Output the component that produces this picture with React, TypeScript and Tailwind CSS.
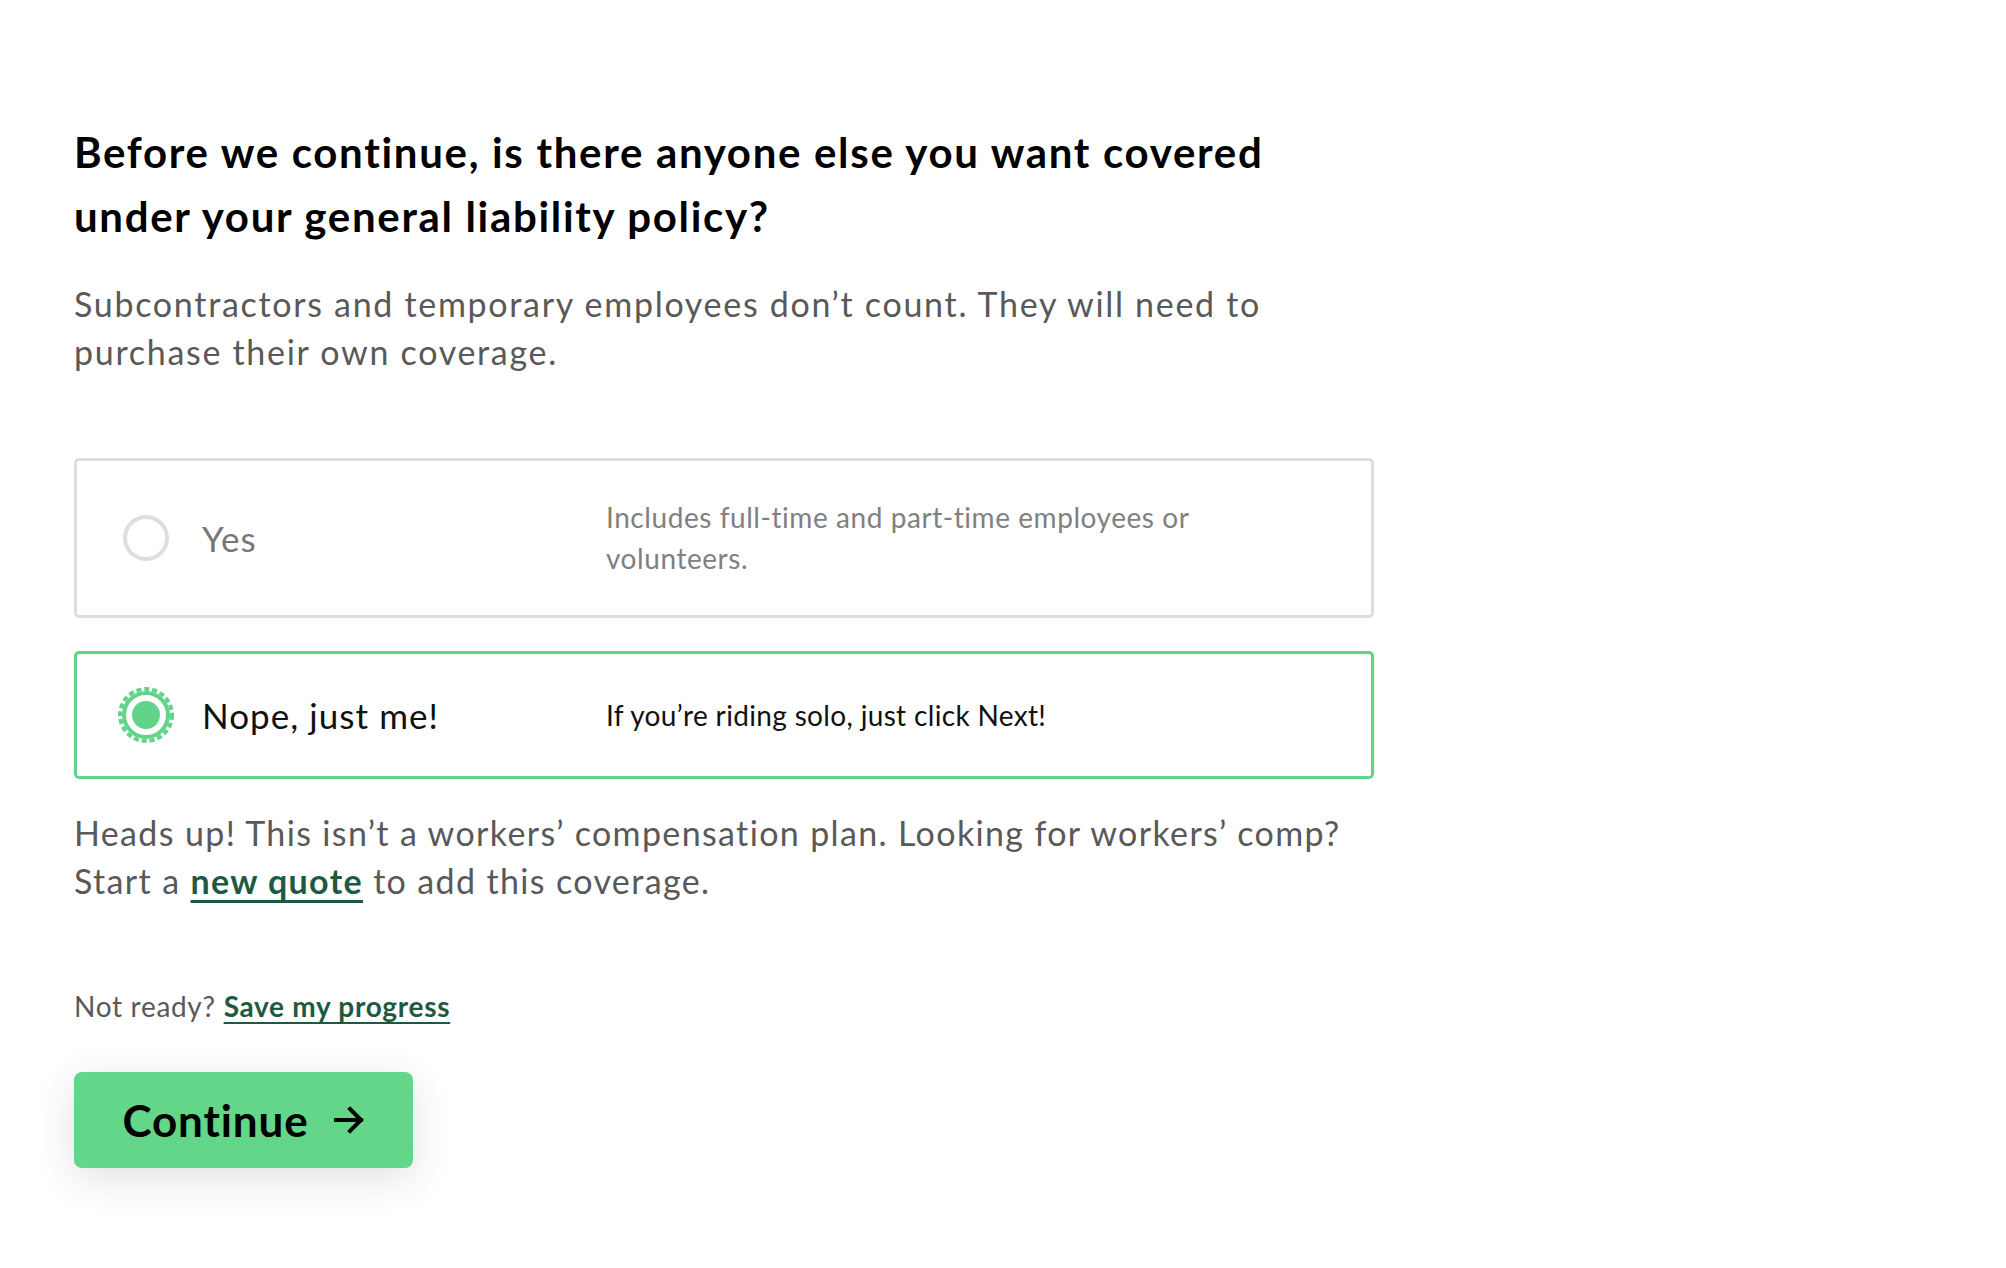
import React from 'react';

const font = { fontFamily: 'Lato, "Noto Sans", sans-serif' };

function EmptyRadio() {
    return (
        <div className="flex h-[56px] w-[56px] shrink-0 items-center justify-center">
            <div className="h-[46px] w-[46px] rounded-full border-[4px] border-[#dedede]" />
        </div>
    );
}

function CheckedRadio() {
    return (
        <svg width="56" height="56" viewBox="0 0 56 56" className="shrink-0">
            <circle cx="28" cy="28" r="26" fill="none" stroke="#62d48a" strokeWidth="4" strokeDasharray="5 3" />
            <circle cx="28" cy="28" r="22" fill="none" stroke="#62d48a" strokeWidth="4" />
            <circle cx="28" cy="28" r="14" fill="#62d48a" />
        </svg>
    );
}

function ArrowIcon() {
    return (
        <svg width="32" height="28" viewBox="0 0 32 28" fill="none" stroke="#000" strokeWidth="4" strokeLinecap="square">
            <path d="M3 14 H28" />
            <path d="M17 3 L28 14 L17 25" strokeLinejoin="miter" />
        </svg>
    );
}

export default function App() {
    const options = [
        {
            id: 'yes',
            label: 'Yes',
            desc: ['Includes full-time and part-time employees or', 'volunteers.'],
            selected: false,
        },
        {
            id: 'no',
            label: 'Nope, just me!',
            desc: ['If you’re riding solo, just click Next!'],
            selected: true,
        },
    ];

    return (
        <div className="min-h-screen w-full bg-white" style={font}>
            <div className="box-content flex w-[1300px] flex-col pl-[74px] pt-[120px]">
                {/* Question */}
                <h1 className="whitespace-nowrap text-[42px] font-bold leading-[64px] tracking-[0.04em] text-black">
                    Before we continue, is there anyone else you want covered
                    <br />
                    under your general liability policy?
                </h1>
                <p className="mt-[32px] whitespace-nowrap text-[34px] leading-[48px] tracking-[0.05em] text-[#595959]">
                    Subcontractors and temporary employees don’t count. They will need to
                    <br />
                    purchase their own coverage.
                </p>

                {/* Options */}
                <div className="mt-[82px] flex flex-col gap-[33px]">
                    {options.map((opt) => (
                        <label
                            key={opt.id}
                            className={
                                opt.selected
                                    ? 'flex cursor-pointer items-center rounded-[5px] border-[3px] border-[#62d48a] py-[33px] pl-[41px] pr-[40px]'
                                    : 'flex cursor-pointer items-center rounded-[5px] border-[3px] border-[#dddddd] py-[36px] pl-[41px] pr-[40px]'
                            }
                        >
                            {opt.selected ? <CheckedRadio /> : <EmptyRadio />}
                            <span
                                className={
                                    opt.selected
                                        ? 'ml-[28px] w-[404px] shrink-0 text-[35px] leading-[44px] tracking-[0.03em] text-[#111]'
                                        : 'ml-[28px] w-[404px] shrink-0 text-[35px] leading-[44px] tracking-[0.03em] text-[#777]'
                                }
                            >
                                {opt.label}
                            </span>
                            <span
                                className={
                                    opt.selected
                                        ? 'whitespace-nowrap text-[28px] leading-[41px] tracking-[0.012em] text-[#111]'
                                        : 'whitespace-nowrap text-[28px] leading-[41px] tracking-[0.02em] text-[#808080]'
                                }
                            >
                                {opt.desc.map((line, i) => (
                                    <React.Fragment key={i}>
                                        {i > 0 && <br />}
                                        {line}
                                    </React.Fragment>
                                ))}
                            </span>
                        </label>
                    ))}
                </div>

                {/* Workers' comp note */}
                <p className="mt-[30px] whitespace-nowrap text-[34px] leading-[48px] tracking-[0.04em] text-[#595959]">
                    Heads up! This isn’t a workers’ compensation plan. Looking for workers’ comp?
                    <br />
                    Start a{' '}
                    <a href="#" className="font-bold text-[#1d5a41] underline decoration-[3px] underline-offset-[6px]">
                        new quote
                    </a>{' '}
                    to add this coverage.
                </p>

                <p className="mt-[81px] text-[28px] leading-[40px] tracking-[0.025em] text-[#595959]">
                    Not ready?{' '}
                    <a href="#" className="font-bold text-[#1d5a41] underline decoration-2 underline-offset-[5px]">
                        Save my progress
                    </a>
                </p>

                <div className="mt-[46px]">
                    <button className="flex h-[96px] w-[339px] items-center justify-center gap-[24px] rounded-[8px] bg-[#64d68a] text-[44px] font-bold tracking-[0.02em] text-black shadow-[0_10px_40px_rgba(0,0,0,0.12)]">
                        Continue
                        <ArrowIcon />
                    </button>
                </div>
            </div>
        </div>
    );
}
